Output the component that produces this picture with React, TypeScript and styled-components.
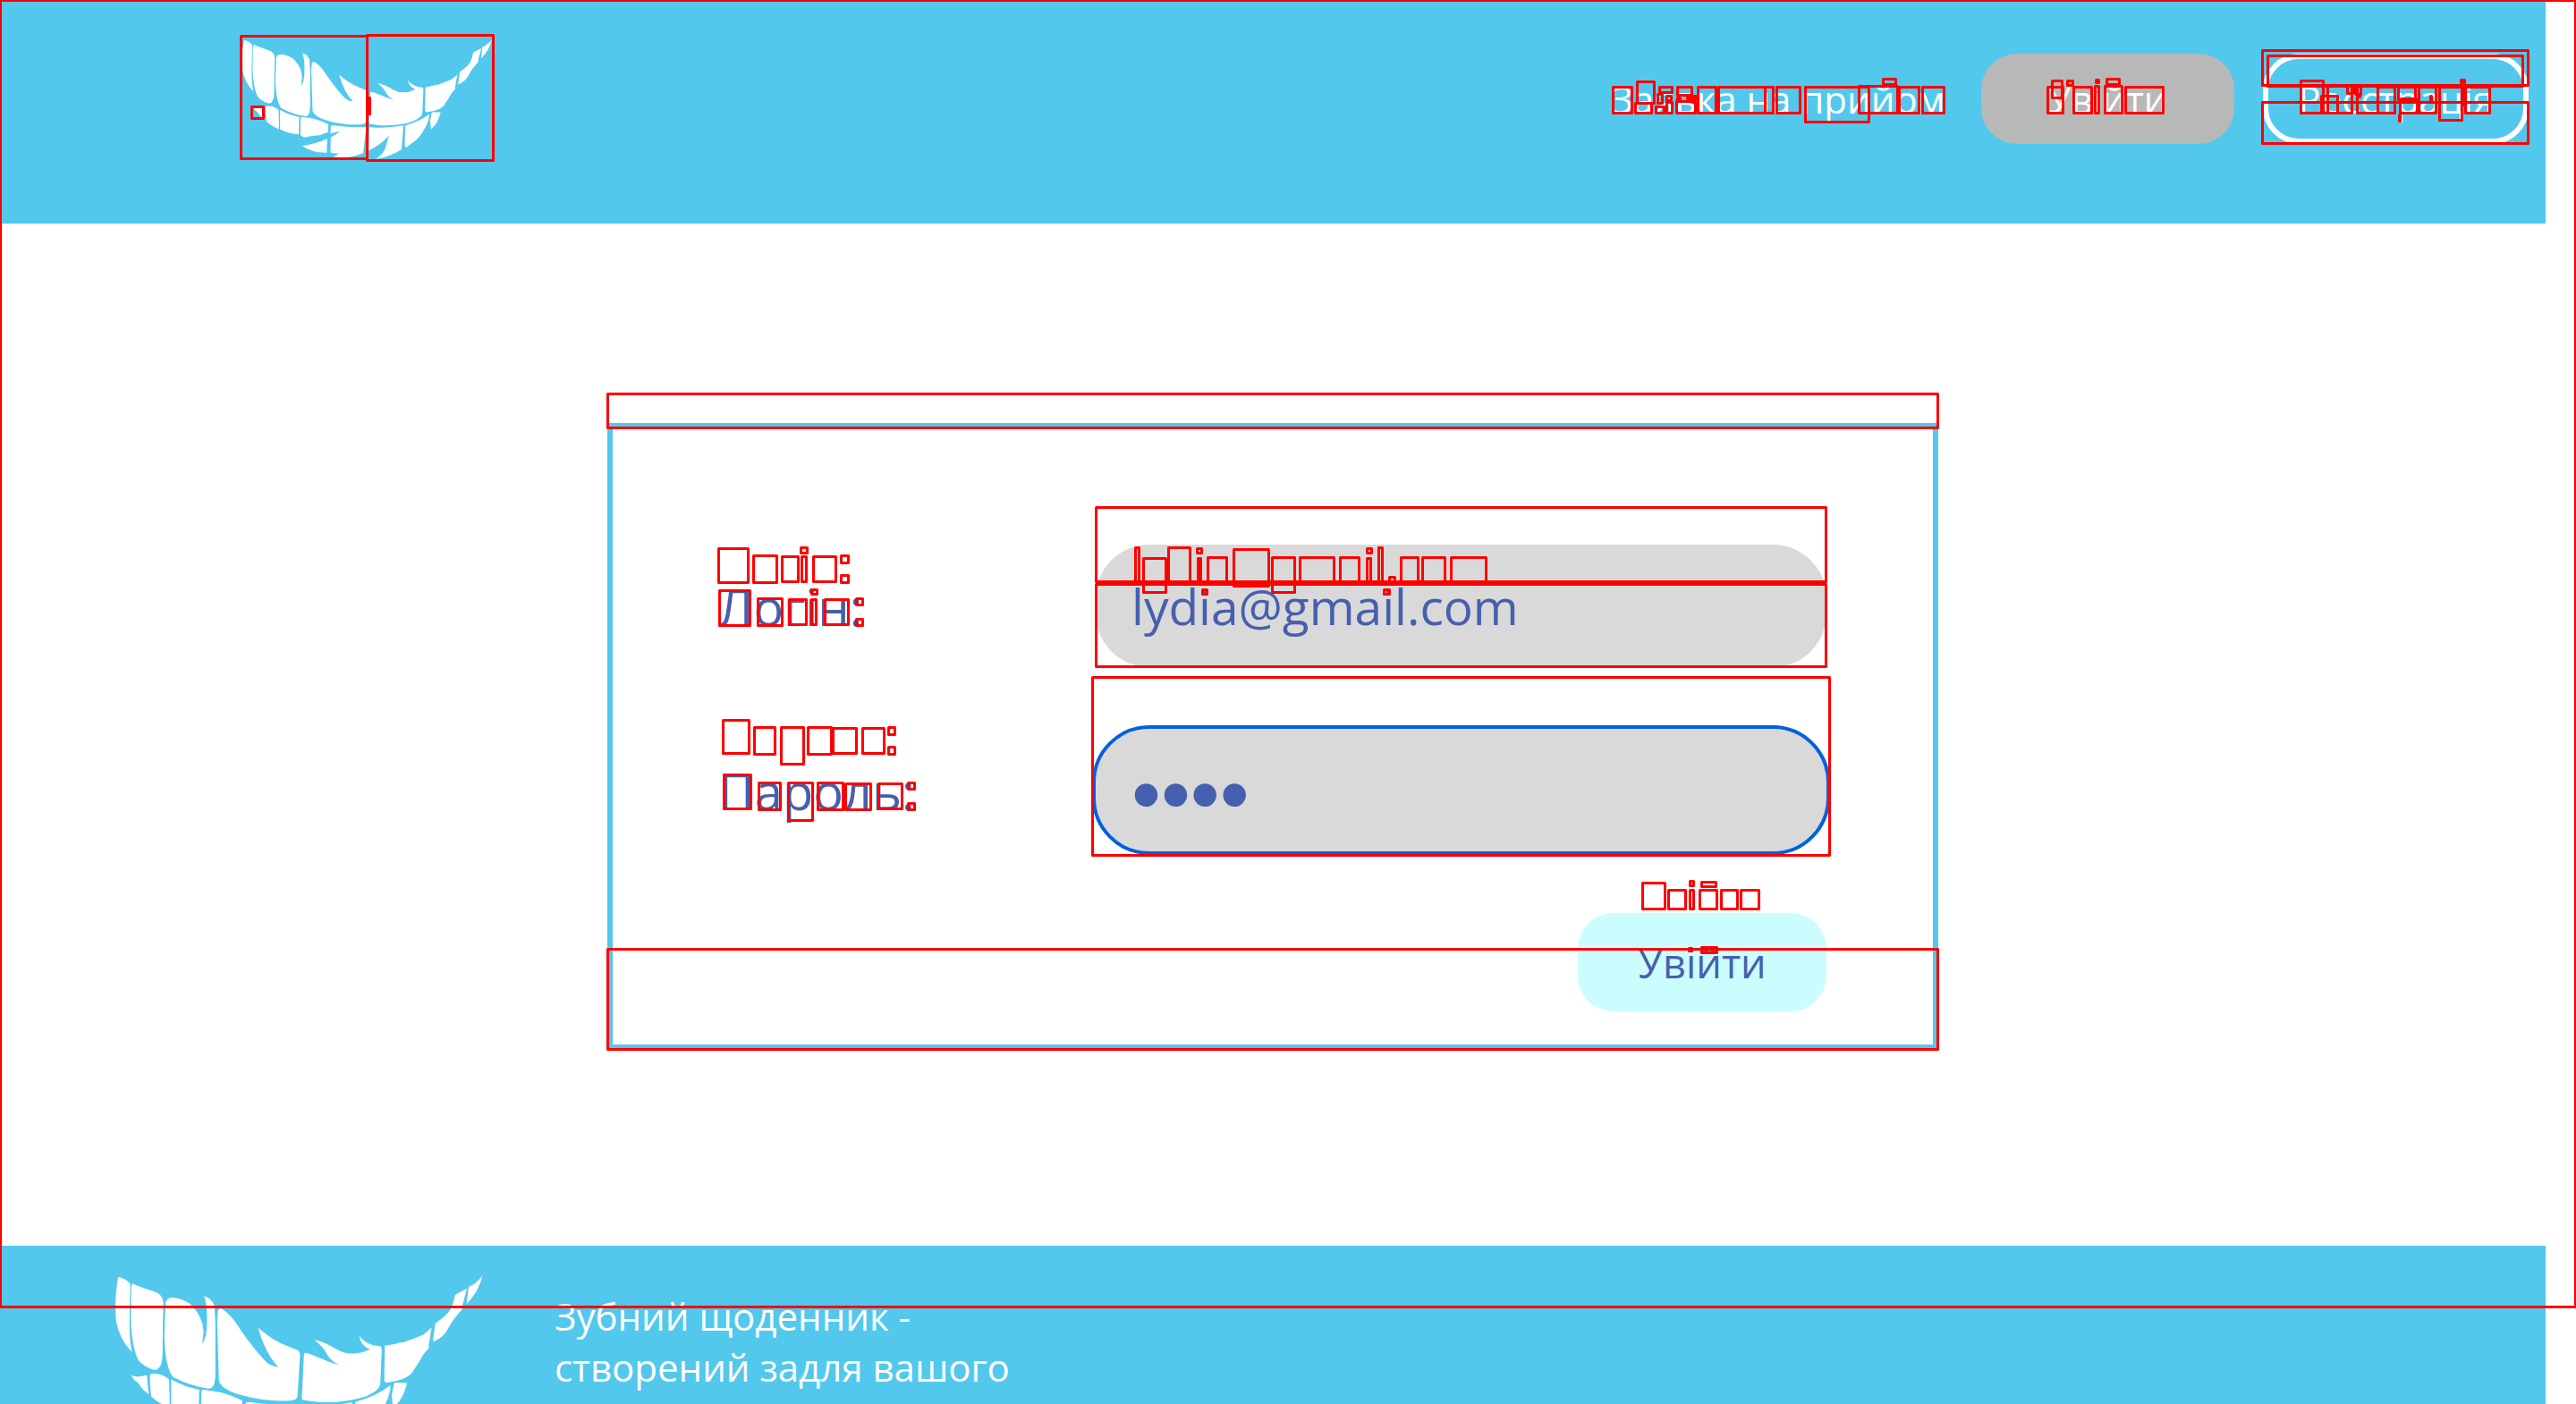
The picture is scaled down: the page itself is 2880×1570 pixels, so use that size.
import React from "react";
import styled, { createGlobalStyle } from "styled-components";

const sky = "#52c8ed";
const ink = "#465fae";

const GlobalStyle = createGlobalStyle`
  * { box-sizing: border-box; }
  body {
    margin: 0;
    background: #fff;
    font-family: "Open Sans", "Noto Sans", sans-serif;
  }
`;

const Page = styled.div`
  position: relative;
  height: 100vh;
  overflow: hidden;
  padding-right: 34px;
`;

const Header = styled.header`
  display: flex;
  justify-content: space-between;
  align-items: flex-start;
  min-height: 250px;
  padding: 43px 19px 0 270px;
  background: ${sky};
`;

const Logo = styled.svg<{ $width: number }>`
  display: block;
  flex: none;
  width: ${(p) => p.$width}px;
  height: auto;
  fill: #fff;
`;

const Nav = styled.nav`
  display: flex;
  align-items: center;
  margin-top: 17px;
`;

const NavLink = styled.a`
  margin-right: 40px;
  color: #fff;
  font-size: 42px;
  text-decoration: none;
`;

const NavButton = styled.button<{ $outlined?: boolean }>`
  height: 101px;
  padding: 0 ${(p) => (p.$outlined ? 33 : 75)}px;
  margin-left: ${(p) => (p.$outlined ? 32 : 0)}px;
  border: ${(p) => (p.$outlined ? "6px solid #fff" : "none")};
  border-radius: 40px;
  background: ${(p) => (p.$outlined ? "transparent" : "#b7b9b8")};
  color: #fff;
  font-family: inherit;
  font-size: 42px;
`;

const Main = styled.main`
  display: flex;
  justify-content: center;
  padding: 223px 0 219px;
`;

const Card = styled.form`
  display: flex;
  flex-direction: column;
  gap: 69px;
  width: 1488px;
  max-width: 100%;
  padding: 130px 119px 37px 118px;
  border: 6px solid ${sky};
`;

const Field = styled.div`
  display: grid;
  grid-template-columns: 422px 1fr;
  align-items: center;
`;

const Label = styled.label`
  color: ${ink};
  font-size: 56px;
`;

const TextBox = styled.input`
  width: 100%;
  height: 137px;
  padding: 0 40px;
  border: none;
  border-radius: 60px;
  outline: none;
  background: #d9d9d9;
  color: ${ink};
  font-family: inherit;
  font-size: 55px;
`;

const PasswordBox = styled(TextBox)`
  padding-top: 10px;
  outline: 4px solid #0060df;
  font-family: "Liberation Sans", sans-serif;
  font-size: 94px;
`;

const Submit = styled.button`
  align-self: flex-end;
  width: 278px;
  height: 110px;
  border: none;
  border-radius: 40px;
  background: #cbfdff;
  color: ${ink};
  font-family: inherit;
  font-size: 45px;
`;

const Footer = styled.footer`
  display: flex;
  align-items: flex-start;
  gap: 79px;
  padding: 32px 128px;
  background: ${sky};
`;

const About = styled.p`
  width: 560px;
  margin: 18px 0 0;
  color: #fff;
  font-size: 42px;
  line-height: 57px;
`;

const Overlay = styled.svg`
  position: absolute;
  inset: 0;
  width: 100%;
  height: 100%;
  pointer-events: none;
  fill: none;
  stroke: #f00;
  stroke-width: 3;
  stroke-linejoin: round;
`;

const teeth = [
  "M98,143 Q122,148 138,167 L135,300 Q135,350 143,396 Q100,350 90,290 Q84,210 98,143Z",
  "M145,165 C165,178 205,186 232,199 Q248,212 249,232 L247,300 L246,400 Q246,450 222,456 Q190,450 166,424 Q146,390 140,300 L141,180Z",
  "M256,230 Q260,213 280,213 Q320,217 345,240 Q385,285 383,330 Q383,350 377,369 Q396,350 395,290 Q397,240 385,208 Q410,215 420,240 L423,300 L423,480 Q420,520 400,518 Q340,510 282,480 Q255,450 252,340Z",
  "M432,255 Q438,247 450,254 Q480,275 510,325 Q560,395 595,430 Q615,445 634,446 Q590,400 566,313 Q595,340 640,365 L700,390 Q707,395 707,405 L698,545 Q695,556 680,558 Q600,565 510,540 Q440,520 435,490 L429,290Z",
  "M720,400 Q722,396 735,400 L780,418 Q810,432 840,439 Q815,430 800,408 Q785,375 754,355 Q790,360 830,387 Q880,415 942,386 Q910,375 905,340 Q925,372 978,377 L981,385 L976,500 Q975,525 925,545 Q840,570 760,562 L715,556 Q712,550 714,530Z",
  "M991,375 L1030,367 L1038,364 L1053,363 Q1090,350 1120,337 Q1138,322 1148,313 L1138,370 L1138,384 Q1120,400 1105,430 Q1085,460 1080,468 Q1060,490 1000,498 Q989,497 989,490Z",
  "M1227,203 L1266,183 L1251,240 L1250,253 Q1215,290 1203,318 Q1185,350 1152,361 L1160,300 Q1195,275 1210,255 Q1222,230 1227,203Z",
  "M1272,177 Q1300,165 1319,138 Q1305,195 1265,234Z",
  "M141,474 Q165,482 187,474 L194,474 Q195,510 201,537 Q180,525 165,500 L150,488Z",
  "M204,470 Q235,462 268,487 L270,560 L268,582 Q230,566 208,544 Q203,500 204,470Z",
  "M275,487 Q320,512 369,522 L367,608 Q310,602 275,582Z",
  "M376,528 Q378,518 392,523 Q460,530 513,558 L512,597 Q490,605 470,612 Q430,613 400,622 Q378,620 375,605Z",
  "M385,665 Q450,655 507,630 L505,695 Q504,700 495,698 Q430,697 385,665Z",
  "M525,566 Q528,562 540,564 Q620,575 699,572 L690,650 L684,700 Q620,728 535,718 Q555,712 565,700 Q530,704 523,695 L525,622 Q550,610 570,592 Q545,598 523,604Z",
  "M715,572 Q800,580 882,564 L880,600 L873,682 Q820,715 746,730 Q790,700 797,665 L812,613 Q770,660 712,687Z",
  "M892,563 Q960,545 1010,507 Q1010,560 952,630 L903,668 Q891,676 889,660Z",
  "M1023,498 L1066,499 Q1050,560 1018,582 L1014,540Z",
];

// Outlined regions as [left, top, right, bottom].
const regions = [
  [0, 0, 2879, 1461],
  [269, 40, 410, 177], [410, 39, 551, 179], [281, 119, 294, 132], [411, 109, 413, 127],
  [1803, 97, 1824, 126], [1830, 91, 1849, 115], [1828, 115, 1846, 126], [1855, 97, 1869, 103],
  [1853, 105, 1858, 115], [1851, 119, 1860, 126], [1863, 107, 1868, 112], [1863, 114, 1869, 126],
  [1875, 97, 1891, 106], [1875, 109, 1878, 112], [1886, 107, 1895, 110], [1892, 107, 1895, 114],
  [1874, 113, 1895, 126], [1898, 97, 1918, 126], [1921, 97, 1973, 126], [1973, 97, 1982, 126],
  [1986, 97, 2012, 126], [2018, 97, 2089, 136], [2078, 96, 2121, 126], [2105, 88, 2119, 94],
  [2123, 97, 2145, 126], [2149, 97, 2173, 126],
  [2289, 97, 2306, 126], [2294, 90, 2305, 109], [2311, 90, 2317, 95], [2318, 97, 2338, 126],
  [2343, 89, 2346, 92], [2342, 96, 2346, 126], [2355, 88, 2369, 94], [2353, 96, 2372, 126],
  [2376, 97, 2418, 126],
  [2529, 56, 2826, 95], [2535, 62, 2820, 96], [2529, 114, 2826, 160],
  [2572, 90, 2597, 126], [2595, 107, 2613, 126], [2602, 96, 2629, 126], [2624, 96, 2630, 104],
  [2633, 96, 2639, 105], [2636, 107, 2638, 108], [2635, 96, 2658, 126], [2658, 97, 2677, 126],
  [2681, 97, 2700, 111], [2684, 110, 2701, 112], [2683, 112, 2702, 126], [2682, 128, 2683, 135],
  [2704, 97, 2723, 126], [2717, 107, 2718, 112], [2727, 97, 2752, 134], [2752, 96, 2754, 117],
  [2751, 89, 2755, 92], [2756, 97, 2783, 126],
  [679, 440, 2166, 478], [679, 1061, 2166, 1173],
  [1225, 567, 2041, 650], [1225, 653, 2041, 745], [1221, 757, 2045, 956],
  [803, 613, 836, 651], [842, 621, 868, 651], [874, 622, 892, 650], [895, 612, 902, 618],
  [896, 622, 901, 650], [909, 622, 934, 650], [940, 621, 948, 629], [940, 643, 948, 651],
  [804, 660, 838, 699], [847, 669, 874, 699], [882, 670, 901, 698], [907, 659, 913, 664],
  [907, 670, 912, 698], [922, 670, 948, 698], [957, 669, 964, 676], [957, 692, 964, 699],
  [808, 805, 837, 842], [843, 813, 866, 843], [873, 813, 898, 854], [903, 813, 929, 843],
  [931, 814, 957, 842], [964, 814, 988, 842], [993, 813, 1000, 821], [993, 835, 1000, 843],
  [809, 866, 839, 904], [848, 875, 872, 905], [881, 875, 908, 917], [914, 875, 942, 905],
  [945, 876, 973, 905], [982, 876, 1008, 904], [1015, 875, 1022, 882], [1015, 898, 1022, 905],
  [1269, 612, 1273, 651], [1278, 624, 1303, 662], [1306, 612, 1330, 651], [1338, 613, 1343, 618],
  [1339, 624, 1342, 651], [1350, 623, 1371, 651], [1379, 614, 1418, 655], [1422, 623, 1447, 662],
  [1453, 623, 1491, 651], [1498, 623, 1519, 651], [1528, 613, 1533, 618], [1528, 624, 1532, 651],
  [1541, 612, 1545, 651], [1553, 645, 1559, 651], [1566, 623, 1585, 651], [1590, 623, 1615, 651],
  [1622, 623, 1661, 651], [1344, 659, 1349, 664], [1547, 659, 1553, 664],
  [1836, 987, 1861, 1016], [1865, 995, 1884, 1016], [1889, 985, 1893, 990], [1889, 995, 1893, 1016],
  [1902, 986, 1918, 991], [1900, 995, 1919, 1016], [1924, 995, 1942, 1016], [1946, 995, 1966, 1016],
  [1888, 1060, 1891, 1063], [1902, 1059, 1919, 1065],
];

function SmileLogo({ width }: { width: number }) {
  return (
    <Logo $width={width} viewBox="85 135 1238 597" aria-hidden="true">
      {teeth.map((d) => (
        <path key={d} d={d} />
      ))}
    </Logo>
  );
}

function RegionMarks() {
  return (
    <Overlay aria-hidden="true">
      <g transform="translate(0.5 0.5)">
        {regions.map(([l, t, r, b], i) => (
          <rect key={i} x={l} y={t} width={r - l} height={b - t} />
        ))}
      </g>
    </Overlay>
  );
}

export default function App() {
  return (
    <Page>
      <GlobalStyle />
      <Header>
        <SmileLogo width={281} />
        <Nav>
          <NavLink href="#appointment">Заявка на прийом</NavLink>
          <NavButton type="button">Увійти</NavButton>
          <NavButton type="button" $outlined>Реєстрація</NavButton>
        </Nav>
      </Header>
      <Main>
        <Card onSubmit={(e: React.FormEvent) => e.preventDefault()}>
          <Field>
            <Label htmlFor="login">Логін:</Label>
            <TextBox id="login" type="text" defaultValue="lydia@gmail.com" />
          </Field>
          <Field>
            <Label htmlFor="password">Пароль:</Label>
            <PasswordBox id="password" type="password" defaultValue="1234" />
          </Field>
          <Submit type="submit">Увійти</Submit>
        </Card>
      </Main>
      <Footer>
        <SmileLogo width={413} />
        <About>Зубний щоденник - створений задля вашого</About>
      </Footer>
      <RegionMarks />
    </Page>
  );
}
